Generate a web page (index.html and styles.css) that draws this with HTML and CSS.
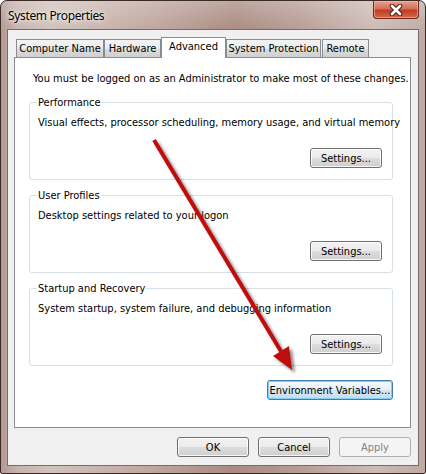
FILE: index.html
```html
<!DOCTYPE html>
<html>
<head>
<meta charset="utf-8">
<link rel="stylesheet" href="styles.css">
</head>
<body>
<div class="window">
  <div class="titlebar">
    <span class="title">System Properties</span>
    <div class="close">
      <svg width="14" height="12" viewBox="0 0 14 12">
        <path d="M3 2 L11 10 M11 2 L3 10" stroke="#4a2418" stroke-width="4.6" stroke-linecap="round" fill="none"/>
        <path d="M3 2 L11 10 M11 2 L3 10" stroke="#ffffff" stroke-width="2.6" stroke-linecap="round" fill="none"/>
      </svg>
    </div>
  </div>
  <div class="client">
    <div class="tabs">
      <div class="tab t-cn">Computer Name</div>
      <div class="tab t-hw">Hardware</div>
      <div class="tab t-adv active">Advanced</div>
      <div class="tab t-sp">System Protection</div>
      <div class="tab t-rm">Remote</div>
    </div>
    <div class="panel">
      <p class="intro">You must be logged on as an Administrator to make most of these changes.</p>
      <fieldset class="group">
        <legend>Performance</legend>
        <p class="desc">Visual effects, processor scheduling, memory usage, and virtual memory</p>
        <div class="btnrow"><button class="btn settings">Settings...</button></div>
      </fieldset>
      <fieldset class="group">
        <legend>User Profiles</legend>
        <p class="desc">Desktop settings related to your logon</p>
        <div class="btnrow"><button class="btn settings">Settings...</button></div>
      </fieldset>
      <fieldset class="group">
        <legend>Startup and Recovery</legend>
        <p class="desc">System startup, system failure, and debugging information</p>
        <div class="btnrow"><button class="btn settings">Settings...</button></div>
      </fieldset>
      <div class="envrow"><button class="btn env">Environment Variables...</button></div>
    </div>
    <div class="footer">
      <button class="btn dlg">OK</button>
      <button class="btn dlg">Cancel</button>
      <button class="btn dlg disabled">Apply</button>
    </div>
  </div>
  <svg class="arrow" width="426" height="474" viewBox="0 0 426 474">
    <defs>
      <filter id="sh" x="-20%" y="-20%" width="140%" height="140%">
        <feDropShadow dx="3" dy="3" stdDeviation="1.8" flood-color="#000" flood-opacity="0.45"/>
      </filter>
    </defs>
    <g filter="url(#sh)">
      <line x1="154" y1="140" x2="282" y2="353" stroke="#bf0a0a" stroke-width="4"/>
      <polygon points="292,370 273,356 289,346" fill="#bf0a0a"/>
    </g>
  </svg>
</div>
</body>
</html>
```
FILE: styles.css
```css
* { box-sizing: border-box; }
html, body { margin: 0; padding: 0; }
body { width: 426px; height: 474px; overflow: hidden; background: #fff; }

.window {
  position: relative;
  width: 426px;
  height: 474px;
  border: 1px solid #3b2b26;
  border-radius: 7px 7px 2px 2px;
  background:
    linear-gradient(to bottom, rgba(255,255,255,0.25), rgba(255,255,255,0) 30px),
    linear-gradient(to right, #b39a92 0%, #c7b4ae 4%, #d2c2bd 12%, #c0a79f 35%, #a98b81 55%, #b69c94 70%, #cdbbb6 88%, #bfa9a2 100%);
  display: flex;
  flex-direction: column;
  font-family: "DejaVu Sans Condensed", "Liberation Sans", Arial, sans-serif;
  font-size: 11px;
  color: #000;
}

.titlebar {
  height: 28px;
  display: flex;
  align-items: flex-start;
  justify-content: space-between;
  padding-left: 7px;
}
.title {
  margin-top: 7px;
  font-family: "Noto Sans", "Open Sans", sans-serif;
  font-size: 12px;
  letter-spacing: -0.35px;
  line-height: 16px;
  color: #000;
  text-shadow: 0 0 6px rgba(255,255,255,0.9), 0 0 3px rgba(255,255,255,0.9);
}
.close {
  width: 46px;
  height: 18px;
  margin-right: 6px;
  border: 1px solid #6e2a1c;
  border-top: none;
  border-radius: 0 0 4px 4px;
  background: linear-gradient(to bottom, #e9a18e 0%, #d4705a 45%, #c23c22 55%, #d46a4c 100%);
  box-shadow: inset 0 0 0 1px rgba(255,200,180,0.5);
  display: flex;
  align-items: center;
  justify-content: center;
}
.close svg { display: block; }

.client {
  margin: 0 6px 0 6px;
  height: 437px;
  border: 1px solid #6f6f6f;
  background: #f0f0f0;
  padding: 7px 7px 0 6px;
  display: flex;
  flex-direction: column;
}

.tabs {
  display: flex;
  align-items: flex-end;
  height: 21px;
  margin-bottom: -1px;
  padding-left: 2px;
}
.tab {
  height: 18px;
  margin-bottom: 1px;
  border: 1px solid #898c95;
  border-bottom: none;
  background: linear-gradient(to bottom, #f3f3f3 0%, #ebebeb 50%, #dddddd 51%, #cfcfcf 100%);
  text-align: center;
  line-height: 17px;
  color: #000;
  white-space: nowrap;
}
.t-cn { width: 88px; }
.t-hw { width: 57px; }
.t-adv { width: 65px; }
.t-sp { width: 95px; }
.t-rm { width: 47px; margin-left: 1px; }
.tab.active {
  position: relative;
  z-index: 1;
  height: 21px;
  margin-bottom: 0;
  background: #fff;
  line-height: 18px;
}

.panel {
  height: 371px;
  background: #fff;
  border: 1px solid #898c95;
  padding: 14px 17px 0 14px;
}
.intro {
  margin: 0 0 0 4px;
  line-height: 13px;
  white-space: nowrap;
}
.group {
  min-width: 0;
  margin: 11px 0 0 0;
  border: 1px solid #d5dfe5;
  border-radius: 3px;
  padding: 7px 10px 10px 8px;
  height: 84px;
}
.group + .group { margin-top: 9px; }
.group legend {
  padding: 0 1px;
  line-height: 13px;
  margin-left: -1px;
}
.desc {
  margin: 0;
  line-height: 13px;
  white-space: nowrap;
}
.btnrow {
  display: flex;
  justify-content: flex-end;
  margin-top: 19px;
}
.btn {
  font-family: "DejaVu Sans Condensed", "Liberation Sans", Arial, sans-serif;
  font-size: 11px;
  color: #000;
  height: 20px;
  padding: 0;
  border: 1px solid #707070;
  border-radius: 3px;
  background: linear-gradient(to bottom, #f2f2f2 0%, #ebebeb 50%, #dddddd 51%, #cfcfcf 100%);
  box-shadow: inset 0 0 0 1px rgba(255,255,255,0.8);
}
.settings { width: 72px; }
.envrow {
  display: flex;
  justify-content: flex-end;
  margin-top: 14px;
}
.env {
  width: 126px;
  border-color: #3c7fb1;
  box-shadow: inset 0 0 0 1px #7fd0f4;
  background: linear-gradient(to bottom, #f4f9fc 0%, #e6f1f8 50%, #d7e7f2 51%, #c9dced 100%);
}

.footer {
  display: flex;
  justify-content: flex-end;
  gap: 9px;
  margin-top: 9px;
}
.dlg { width: 72px; }
.disabled {
  color: #838383;
  border-color: #adb2b5;
  background: #f4f4f4;
  box-shadow: none;
}

.arrow {
  position: absolute;
  left: -1px;
  top: -1px;
  pointer-events: none;
}
```
